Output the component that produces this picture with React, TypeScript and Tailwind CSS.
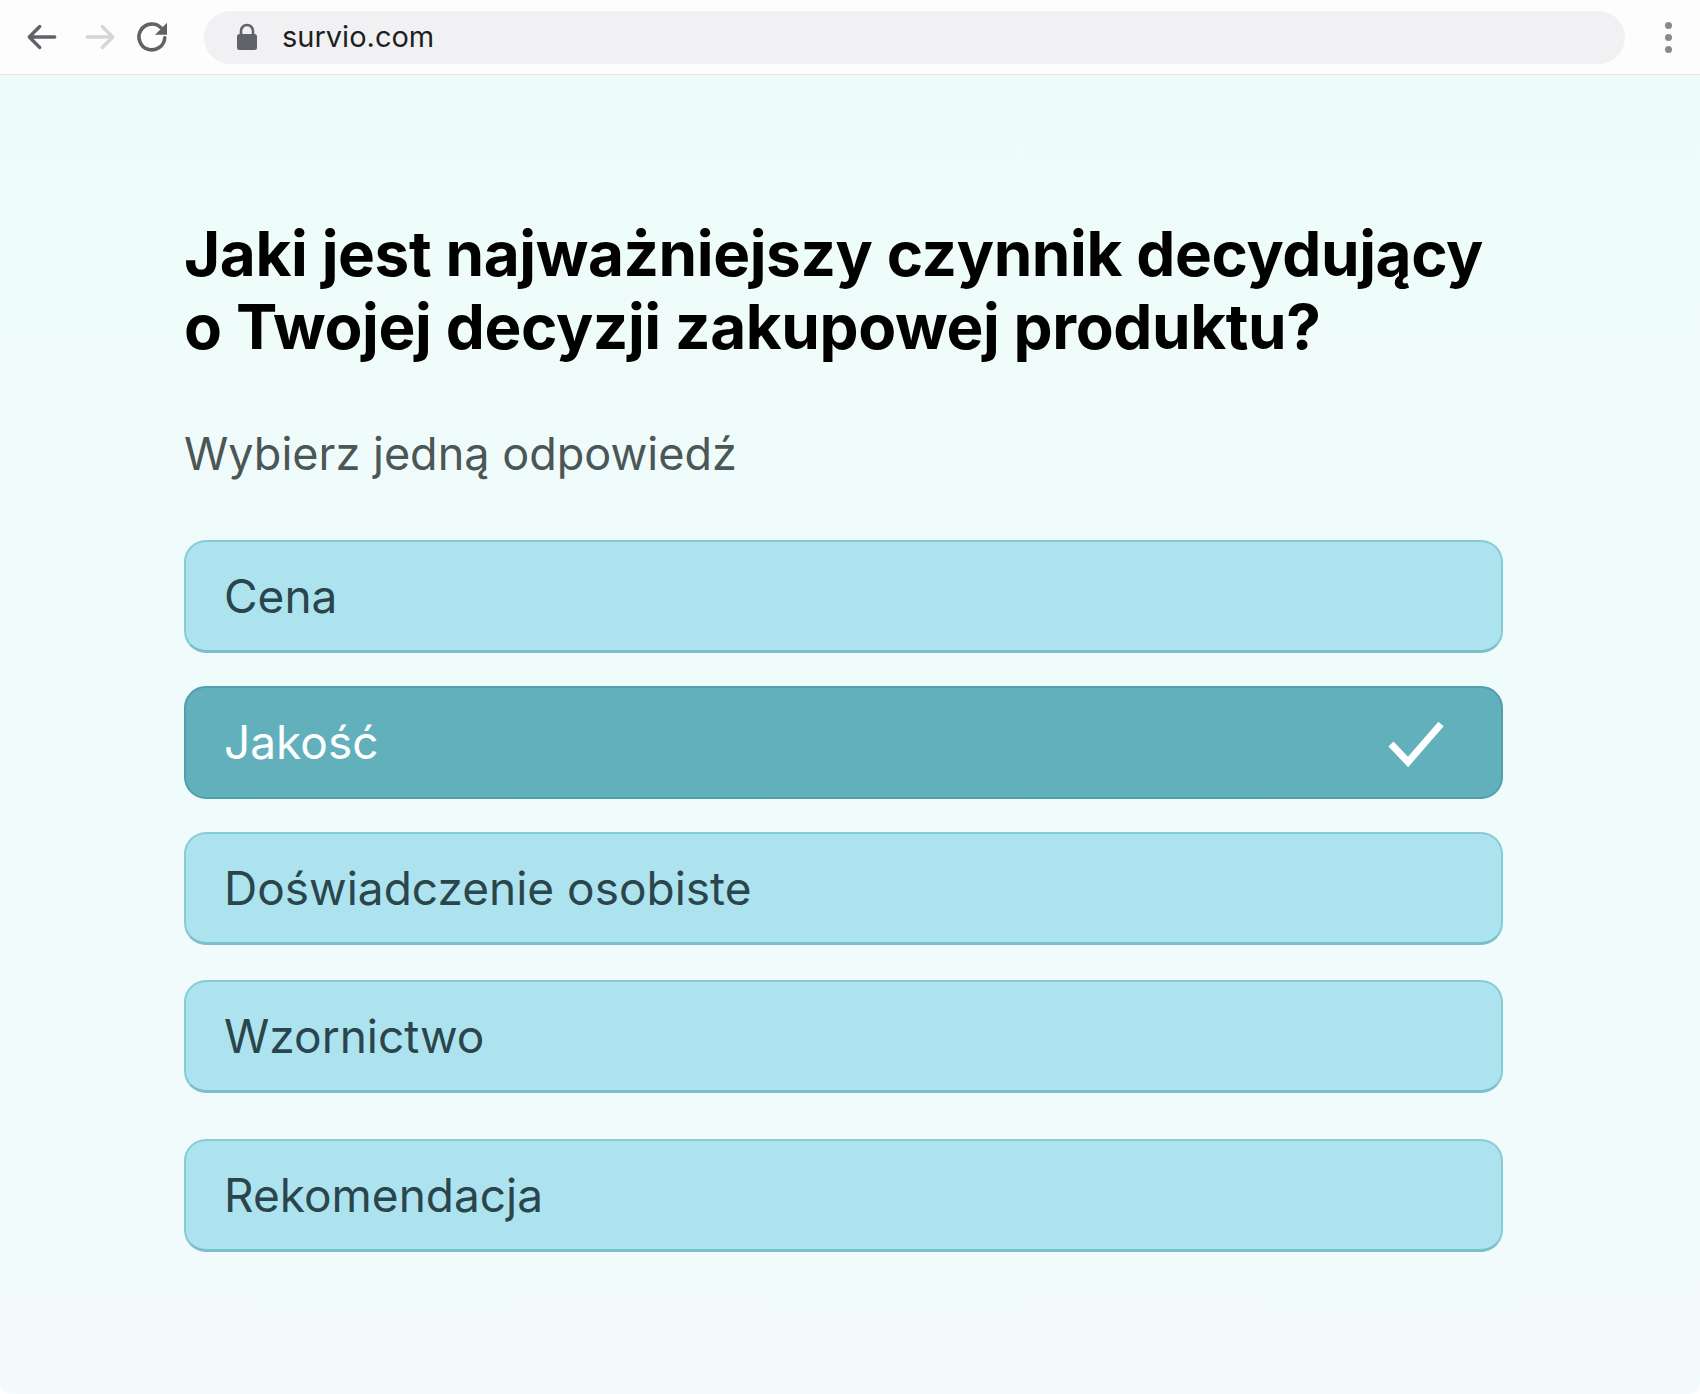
import React, { useState } from 'react';

const options = ['Cena', 'Jakość', 'Doświadczenie osobiste', 'Wzornictwo', 'Rekomendacja'];

const BrowserBar: React.FC = () => (
  <div className="h-[75px] flex items-center bg-[#fdfdfd] border-b border-[#e2e2e2]">
    <div className="flex items-center gap-[22px] pl-[24px]">
      {/* back */}
      <svg width="36" height="36" viewBox="0 0 24 24" fill="none" stroke="#5f6368" strokeWidth="2.2" strokeLinecap="round" strokeLinejoin="round">
        <path d="M20.5 12H3.5M10.5 5l-7 7 7 7" />
      </svg>
      {/* forward */}
      <svg width="36" height="36" viewBox="0 0 24 24" fill="none" stroke="#d6d6d6" strokeWidth="2.2" strokeLinecap="round" strokeLinejoin="round">
        <path d="M3.5 12h17M13.5 5l7 7-7 7" />
      </svg>
      {/* reload */}
      <svg width="36" height="36" viewBox="0 0 24 24" fill="none" className="-ml-[6px]">
        <path d="M20.5 12.5a8.6 8.6 0 1 1-2.5-6.6" stroke="#5f6368" strokeWidth="2.4" strokeLinecap="round" />
        <path d="M22 2.5v8h-8z" fill="#5f6368" />
      </svg>
    </div>
    <div className="ml-[34px] w-[1421px] h-[53px] rounded-full bg-[#f1f1f3] flex items-center pl-[32px]">
      <svg width="22" height="28" viewBox="0 0 22 28">
        <path d="M5 12V8a6 6 0 0 1 12 0v4" fill="none" stroke="#5f6368" strokeWidth="2.6" />
        <rect x="1" y="11" width="20" height="16" rx="2.5" fill="#5f6368" />
      </svg>
      <span className="ml-[24px] text-[29px] text-[#1f1f1f] font-['Inter',sans-serif]">survio.com</span>
    </div>
    <div className="ml-[40px] flex flex-col gap-[5px]">
      <span className="w-[7px] h-[7px] rounded-full bg-[#8a8a8e]" />
      <span className="w-[7px] h-[7px] rounded-full bg-[#8a8a8e]" />
      <span className="w-[7px] h-[7px] rounded-full bg-[#8a8a8e]" />
    </div>
  </div>
);

const App: React.FC = () => {
  const [selected, setSelected] = useState<number>(1);

  return (
    <div className="w-[1700px] h-[1394px] bg-white font-['Inter',sans-serif]">
      <div className="h-full flex flex-col rounded-b-[10px] overflow-hidden bg-gradient-to-b from-[#edfcf9] to-[#f3fbfd]">
        <BrowserBar />
        <div className="pl-[184px] pt-[142px]">
          <h1 className="w-[1330px] text-[62px] leading-[73px] font-bold text-black tracking-[-0.4px]">
            Jaki jest najważniejszy czynnik decydujący o Twojej decyzji zakupowej produktu?
          </h1>
          <p className="mt-[63px] text-[45px] leading-[56px] text-[#4b5657]">Wybierz jedną odpowiedź</p>
          <div className="mt-[58px] w-[1319px] flex flex-col gap-[33px]">
            {options.map((opt, i) => {
              const isSel = selected === i;
              return (
                <button
                  key={opt}
                  onClick={() => setSelected(i)}
                  className={
                    isSel
                      ? 'h-[113px] rounded-[22px] border-2 border-[#4f9fad] bg-[#63b0bd] flex items-center justify-between pl-[38px] pr-[56px] text-left'
                      : 'h-[113px] rounded-[22px] border-2 border-[#86cbd8] border-b-[3px] border-b-[#7bbfcc] bg-[#ade3ef] flex items-center pl-[38px] text-left' +
                        (i === 4 ? ' mt-[13px]' : i === 3 ? ' mt-[2px]' : '')
                  }
                >
                  <span className={isSel ? 'text-[46px] text-white' : 'text-[46px] text-[#2a464c]'}>{opt}</span>
                  {isSel && (
                    <svg width="58" height="48" viewBox="0 0 58 48" fill="none">
                      <path d="M4 25l17 18L54 5" stroke="white" strokeWidth="7" />
                    </svg>
                  )}
                </button>
              );
            })}
          </div>
        </div>
      </div>
    </div>
  );
};

export default App;
